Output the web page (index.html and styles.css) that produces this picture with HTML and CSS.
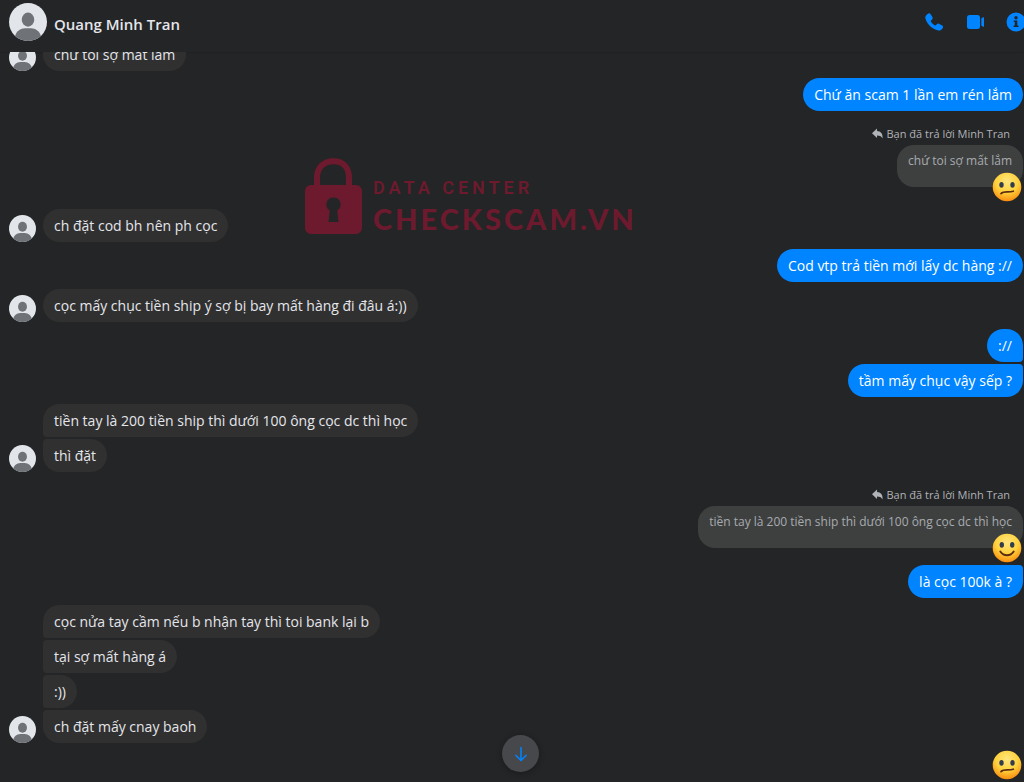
FILE: index.html
```html
<!DOCTYPE html>
<html lang="vi">

<head>
    <meta charset="UTF-8">
    <meta name="viewport" content="width=device-width, initial-scale=1.0">
    <title>Quang Minh Tran</title>
    <link rel="stylesheet" href="styles.css">
</head>

<body>
    <!-- shared shapes -->
    <svg class="defs" aria-hidden="true">
        <defs>
            <radialGradient id="face" cx="50%" cy="30%" r="72%">
                <stop offset="0" stop-color="#ffe57f" />
                <stop offset="0.55" stop-color="#ffd13b" />
                <stop offset="1" stop-color="#f9880d" />
            </radialGradient>
            <clipPath id="round">
                <circle cx="20" cy="20" r="20" />
            </clipPath>
        </defs>
        <symbol id="avatar" viewBox="0 0 40 40">
            <g clip-path="url(#round)">
                <rect width="40" height="40" fill="#e2e5ea" />
                <ellipse cx="20" cy="17.500" rx="6.600" ry="7.400" fill="#6f7378" />
                <path d="M6 42V38c0-7 5-11.500 11-11.500h6c6 0 11 4.500 11 11.500v4z" fill="#6f7378" />
            </g>
        </symbol>
        <symbol id="sad" viewBox="0 0 30 30">
            <circle cx="15" cy="15" r="14.300" fill="url(#face)" />
            <ellipse cx="9.500" cy="12.800" rx="2.200" ry="2.900" fill="#333c4e" />
            <ellipse cx="20.500" cy="12.800" rx="2.200" ry="2.900" fill="#333c4e" />
            <path d="M9 21.600c3-3 7.500-.6 12.300-2.400" fill="none" stroke="#5b2b13" stroke-width="1.700" stroke-linecap="round" />
        </symbol>
        <symbol id="smile" viewBox="0 0 30 30">
            <circle cx="15" cy="15" r="14.300" fill="url(#face)" />
            <ellipse cx="9.800" cy="11.800" rx="2.200" ry="2.900" fill="#333c4e" />
            <ellipse cx="20.200" cy="11.800" rx="2.200" ry="2.900" fill="#333c4e" />
            <path d="M8.300 18.500c3.400 5 10 5 13.400 0" fill="none" stroke="#5b2b13" stroke-width="1.900" stroke-linecap="round" />
        </symbol>
        <symbol id="reply" viewBox="0 0 12 12">
            <path d="M5.500.5v2.700C9.500 3.400 12 6 11.500 11.500 10 9 8.300 8.300 5.500 8.300V11L0 5.800z" fill="#b0b3b8" />
        </symbol>
    </svg>

    <header class="header">
        <svg class="header-avatar"><use href="#avatar" /></svg>
        <h1 class="header-name">Quang Minh Tran</h1>
        <div class="header-actions">
            <button class="icon-btn" type="button" aria-label="Gọi thoại">
                <svg viewBox="0 0 20 20">
                    <path d="M3.200 2.200C4.600 1 5.800.9 6.500 2L8.400 5c.6 1 .3 1.900-.4 2.600l-.9.900c-.4.400-.4.800-.1 1.300 1.100 1.600 2 2.500 3.700 3.500.5.300.9.200 1.300-.2l.8-.8c.7-.7 1.600-.9 2.500-.4l2.900 1.700c1.100.7 1.200 1.700.3 2.900-1.200 1.700-2.800 2.400-5 1.800C7.500 16.800 2.700 11.500 1.400 6.600.9 4.700 1.800 3.300 3.200 2.200z" />
                </svg>
            </button>
            <button class="icon-btn" type="button" aria-label="Gọi video">
                <svg viewBox="0 0 20 20">
                    <rect x="2" y="3" width="13" height="14" rx="2.500" />
                    <path d="M16.300 6.500L18 5.300q1-.5 1 .5v8.400q0 1-1 .5l-1.700-1.200z" />
                </svg>
            </button>
            <button class="icon-btn" type="button" aria-label="Thông tin">
                <svg viewBox="0 0 20 20">
                    <path fill-rule="evenodd" d="M10 .5a9.500 9.500 0 1 0 0 19 9.500 9.500 0 0 0 0-19zM10 4a1.700 1.700 0 1 1 0 3.400A1.700 1.700 0 0 1 10 4zM7.800 8.500h3.500v5h1.200V15H7.600v-1.500h1.200V10h-1z" />
                </svg>
            </button>
        </div>
    </header>

    <main class="chat">
        <div class="messages">
            <div class="group">
                <svg class="avatar"><use href="#avatar" /></svg>
                <div class="bubbles">
                    <p class="bubble">chứ toi sợ mất lắm</p>
                </div>
            </div>

            <div class="group mine">
                <div class="bubbles">
                    <p class="bubble">Chứ ăn scam 1 lần em rén lắm</p>
                </div>
            </div>

            <div class="group mine">
                <div class="bubbles">
                    <p class="reply-label"><svg class="reply-icon"><use href="#reply" /></svg>Bạn đã trả lời Minh Tran</p>
                    <p class="quote">chứ toi sợ mất lắm</p>
                    <svg class="emoji over-quote" role="img" aria-label="😕"><use href="#sad" /></svg>
                </div>
            </div>

            <div class="group">
                <svg class="avatar"><use href="#avatar" /></svg>
                <div class="bubbles">
                    <p class="bubble">ch đặt cod bh nên ph cọc</p>
                </div>
            </div>

            <div class="group mine">
                <div class="bubbles">
                    <p class="bubble">Cod vtp trả tiền mới lấy dc hàng ://</p>
                </div>
            </div>

            <div class="group">
                <svg class="avatar"><use href="#avatar" /></svg>
                <div class="bubbles">
                    <p class="bubble">cọc mấy chục tiền ship ý sợ bị bay mất hàng đi đâu á:))</p>
                </div>
            </div>

            <div class="group mine">
                <div class="bubbles">
                    <p class="bubble">://</p>
                    <p class="bubble">tầm mấy chục vậy sếp ?</p>
                </div>
            </div>

            <div class="group">
                <svg class="avatar"><use href="#avatar" /></svg>
                <div class="bubbles">
                    <p class="bubble">tiền tay là 200 tiền ship thì dưới 100 ông cọc dc thì học</p>
                    <p class="bubble">thì đặt</p>
                </div>
            </div>

            <div class="group mine">
                <div class="bubbles">
                    <p class="reply-label"><svg class="reply-icon"><use href="#reply" /></svg>Bạn đã trả lời Minh Tran</p>
                    <p class="quote">tiền tay là 200 tiền ship thì dưới 100 ông cọc dc thì học</p>
                    <svg class="emoji over-quote" role="img" aria-label="🙂"><use href="#smile" /></svg>
                    <p class="bubble">là cọc 100k à ?</p>
                </div>
            </div>

            <div class="group">
                <svg class="avatar"><use href="#avatar" /></svg>
                <div class="bubbles">
                    <p class="bubble">cọc nửa tay cầm nếu b nhận tay thì toi bank lại b</p>
                    <p class="bubble">tại sợ mất hàng á</p>
                    <p class="bubble">:))</p>
                    <p class="bubble">ch đặt mấy cnay baoh</p>
                </div>
            </div>

            <div class="group mine">
                <div class="bubbles">
                    <svg class="emoji" role="img" aria-label="😕"><use href="#sad" /></svg>
                </div>
            </div>
        </div>

        <div class="watermark">
            <svg class="lock" viewBox="0 0 57 76">
                <path d="M12 30V20C12 9 19 3.200 28.500 3.200S44 9 44 20v10" fill="none" stroke="#6d1a2e" stroke-width="6" />
                <path fill="#6d1a2e" fill-rule="evenodd" d="M6 27h45a6 6 0 0 1 6 6v37a6 6 0 0 1-6 6H6a6 6 0 0 1-6-6V33a6 6 0 0 1 6-6zM28.500 39.500a7 7 0 0 0-3.700 13L23.500 64h10l-1.300-11.500a7 7 0 0 0-3.700-13z" />
            </svg>
            <div class="watermark-text">
                <span class="watermark-top">DATA CENTER</span>
                <span class="watermark-name">CHECKSCAM.VN</span>
            </div>
        </div>

        <button class="scroll-btn" type="button" aria-label="Cuộn xuống">
            <svg viewBox="0 0 16 16">
                <path d="M8 1.500v13M2.800 9.300L8 14.500l5.200-5.200" fill="none" stroke="#0084ff" stroke-width="1.500" stroke-linecap="round" stroke-linejoin="round" />
            </svg>
        </button>
    </main>
</body>

</html>
```
FILE: styles.css
```css
* {
    margin: 0;
    padding: 0;
    box-sizing: border-box;
}

body {
    height: 100vh;
    display: flex;
    flex-direction: column;
    overflow: hidden;
    background-color: #242526;
    color: #e4e6eb;
    font-family: "Open Sans", "Noto Sans", sans-serif;
    font-size: 14px;
    line-height: 19px;
}

button {
    border: none;
    background: none;
    cursor: pointer;
}

svg {
    display: block;
    flex-shrink: 0;
}

.defs {
    position: absolute;
    width: 0;
    height: 0;
}

/* header */
.header {
    flex-shrink: 0;
    height: 52px;
    padding: 0 0 8px 9px;
    display: flex;
    align-items: center;
    gap: 7px;
    box-shadow: 0 0 2px rgba(0, 0, 0, 0.3);
}

.header-avatar {
    width: 38px;
    height: 38px;
}

.header-name {
    padding-top: 4px;
    font-size: 15px;
    font-weight: 600;
}

.header-actions {
    margin-left: auto;
    margin-right: -2px;
    display: flex;
    gap: 21px;
}

.icon-btn {
    width: 20px;
    height: 20px;
}

.icon-btn svg {
    width: 20px;
    height: 20px;
    fill: #0084ff;
}

/* messages */
.chat {
    position: relative;
    flex: 1;
    min-height: 0;
    overflow: hidden;
}

/* scrolled: the first row is partly under the header */
.messages {
    margin-top: -14px;
    padding: 0 1px 0 9px;
    display: flex;
    flex-direction: column;
    gap: 7px;
}

.group {
    display: flex;
    align-items: flex-end;
    gap: 7px;
}

.avatar {
    width: 27px;
    height: 27px;
}

.bubbles {
    display: flex;
    flex-direction: column;
    align-items: flex-start;
    gap: 2px;
}

.bubble {
    padding: 7px 11px;
    border-radius: 4px 17px 17px 4px;
    background-color: #303030;
}

.bubble:first-child {
    border-top-left-radius: 17px;
}

.bubble:last-child {
    border-bottom-left-radius: 17px;
}

.mine {
    justify-content: flex-end;
}

.mine .bubbles {
    align-items: flex-end;
}

.mine .bubble {
    border-radius: 17px 4px 4px 17px;
    background-color: #0084ff;
    color: #fff;
}

.mine .bubble:first-child {
    border-top-right-radius: 17px;
}

.mine .bubble:last-child {
    border-bottom-right-radius: 17px;
}

.reply-label {
    height: 25px;
    padding: 5px 13px 0 0;
    display: flex;
    align-items: center;
    gap: 4px;
    color: #b0b3b8;
    font-size: 11px;
}

.reply-icon {
    width: 11px;
    height: 11px;
}

.quote {
    padding: 6px 11px 17px;
    border-radius: 17px;
    background-color: #3e4040;
    color: #a8abaf;
    font-size: 12px;
}

.emoji {
    width: 30px;
    height: 30px;
    margin-right: 1px;
}

.over-quote {
    position: relative;
    margin-top: -17px;
}

/* watermark */
.watermark {
    position: absolute;
    top: 106px;
    left: 305px;
    display: flex;
    align-items: flex-end;
    gap: 11px;
    color: #6d1a2e;
    pointer-events: none;
}

.lock {
    width: 57px;
    height: 76px;
}

.watermark-text {
    display: flex;
    flex-direction: column;
}

.watermark-top {
    font-family: Roboto, sans-serif;
    font-size: 18px;
    font-weight: 600;
    line-height: 32px;
    letter-spacing: 4px;
}

.watermark-name {
    font-family: Lato, sans-serif;
    font-size: 29px;
    font-weight: 900;
    line-height: 30px;
    letter-spacing: 3px;
}

/* jump to the newest message */
.scroll-btn {
    position: absolute;
    bottom: 10px;
    left: 50%;
    margin-left: -10px;
    width: 37px;
    height: 37px;
    display: flex;
    align-items: center;
    justify-content: center;
    border-radius: 50%;
    background-color: #47484b;
    box-shadow: 0 1px 6px rgba(0, 0, 0, 0.3);
}

.scroll-btn svg {
    width: 16px;
    height: 16px;
}
```
